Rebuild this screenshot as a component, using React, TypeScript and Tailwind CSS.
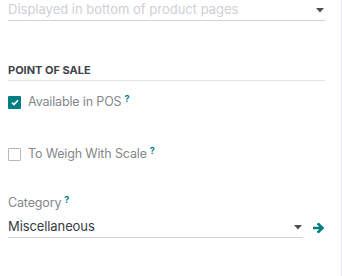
import React from "react";

const TEAL = "#017e84";

function Caret({ className = "" }: { className?: string }) {
  return (
    <svg width="8" height="5" viewBox="0 0 8 5" className={className}>
      <path d="M0 0h8L4 4.5z" fill="#4b4f57" />
    </svg>
  );
}

function Help() {
  return (
    <sup className="ml-[3px] text-[9px] font-bold" style={{ color: TEAL }}>
      ?
    </sup>
  );
}

function Check({ checked }: { checked?: boolean }) {
  return (
    <span
      className={
        checked
          ? "flex h-[13px] w-[13px] items-center justify-center rounded-[1px] bg-[#017e84]"
          : "flex h-[13px] w-[13px] items-center justify-center rounded-[1px] border border-[#b5b9be] bg-white"
      }
    >
      {checked && (
        <svg width="8" height="7" viewBox="0 0 8 7">
          <path d="M1 3.6l2 2L7 1.2" stroke="white" strokeWidth="1.6" fill="none" />
        </svg>
      )}
    </span>
  );
}

export default function App() {
  return (
    <div
      className="h-[276px] w-[342px] border-r border-[#e4e6e9] bg-white pl-2"
      style={{ fontFamily: "Inter, 'Noto Sans', sans-serif" }}
    >
      <div className="w-[317px]">
        {/* website ribbon placeholder field */}
        <div className="flex h-[21px] items-center justify-between border-b border-[#cfd2d6] pr-[1px]">
          <span className="text-[13px] text-[#cdd0d4]">Displayed in bottom of product pages</span>
          <Caret />
        </div>

        {/* section title */}
        <div className="mt-[42px] border-b border-[#e1e3e6] pb-[3px] text-[11px] font-bold uppercase leading-[14px] text-[#3f434b]">
          Point of Sale
        </div>

        <label className="mt-[15px] flex h-[13px] items-center gap-[7px]">
          <Check checked />
          <span className="text-[12.5px] tracking-[-0.15px] text-[#84878c]">
            Available in POS
            <Help />
          </span>
        </label>

        <label className="mt-[39px] flex h-[13px] items-center gap-[7px]">
          <Check />
          <span className="text-[12.5px] tracking-[-0.15px] text-[#84878c]">
            To Weigh With Scale
            <Help />
          </span>
        </label>

        <div className="mt-[34px] text-[12.5px] leading-[16px] tracking-[-0.15px] text-[#84878c]">
          Category
          <Help />
        </div>

        <div className="mt-[6px] flex items-center">
          <div className="flex h-[21px] w-[295px] items-center justify-between border-b border-[#cfd2d6] pr-[1px]">
            <span className="text-[13px] tracking-[-0.1px] text-[#383b42]">Miscellaneous</span>
            <Caret />
          </div>
          <svg width="12" height="10" viewBox="0 0 12 10" className="ml-[10px]">
            <path d="M1 5h8M5.5 1.2L9.5 5l-4 3.8" stroke={TEAL} strokeWidth="2.6" fill="none" strokeLinecap="square" />
          </svg>
        </div>
      </div>
    </div>
  );
}
